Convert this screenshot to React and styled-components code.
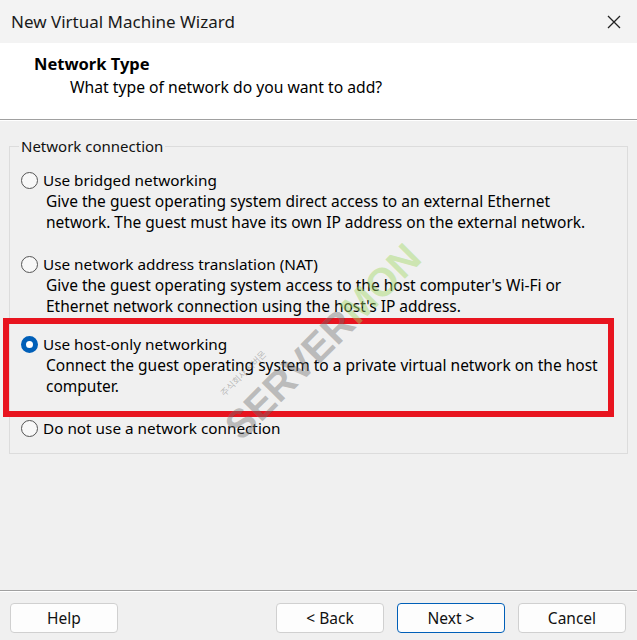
import React, { useState } from "react";
import styled, { createGlobalStyle } from "styled-components";

const GlobalStyle = createGlobalStyle`
  html, body {
    margin: 0;
    padding: 0;
    background: #f0f0f0;
  }
  body {
    font-family: "Noto Sans", "Open Sans", sans-serif;
    color: #000;
  }
`;

const Window = styled.div`
  position: relative;
  width: 637px;
  height: 640px;
  background: #f0f0f0;
  display: flex;
  flex-direction: column;
  overflow: hidden;
`;

const TitleBar = styled.div`
  height: 43px;
  display: flex;
  align-items: center;
  justify-content: space-between;
  padding: 0 12px 0 11px;
  background: #f3f3f3;
  font-size: 17px;
  color: #1a1a1a;
`;

const CloseButton = styled.div`
  width: 22px;
  height: 22px;
  display: flex;
  align-items: center;
  justify-content: center;
`;

const Header = styled.div`
  background: #fff;
  height: 77px;
  padding: 9px 0 0 34px;
  box-sizing: border-box;
  border-bottom: 1px solid #a0a0a0;
  box-shadow: 0 1px 0 #fff;
`;

const HeaderTitle = styled.div`
  font-weight: 700;
  font-size: 16.5px;
  line-height: 23px;
`;

const HeaderSub = styled.div`
  font-size: 15.7px;
  line-height: 24px;
  padding-left: 36px;
`;

const Body = styled.div`
  flex: 1;
  padding: 16px 9px 0 9px;
`;

const Group = styled.fieldset`
  margin: 0;
  min-width: 0;
  border: 1px solid #dcdcdc;
  padding: 13px 10px 14px 11px;
  box-sizing: border-box;
`;

const Legend = styled.legend`
  font-size: 15px;
  padding: 0 2px;
  margin-left: -2px;
  color: #111;
`;

const Option = styled.div`
  display: flex;
  flex-direction: column;
  margin-bottom: ${(p) => p.gap}px;
`;

const OptionRow = styled.label`
  display: flex;
  align-items: center;
  gap: 5px;
  font-size: 15.3px;
  line-height: 22px;
  cursor: default;
`;

const RadioDot = styled.span`
  width: 17px;
  height: 17px;
  box-sizing: border-box;
  border-radius: 50%;
  flex: none;
  background: ${(p) => (p.checked ? "#fff" : "#f8f8f8")};
  border: ${(p) => (p.checked ? "5px solid #005fb8" : "1.3px solid #555")};
`;

const Description = styled.div`
  padding-left: 25px;
  font-size: 15.5px;
  line-height: 21px;
  white-space: nowrap;
`;

const Highlight = styled.div`
  margin: 0 3px 0 -18px;
  padding: 9px 0 14px 12px;
  border: 6px solid #e8141f;
`;

const Footer = styled.div`
  border-top: 1px solid #a0a0a0;
  box-shadow: inset 0 1px 0 #fff;
  height: 50px;
  box-sizing: border-box;
  display: flex;
  align-items: flex-start;
  padding: 12px 11px 0 10px;
  gap: 13px;
`;

const Spacer = styled.div`
  flex: 1;
`;

const Button = styled.button`
  width: 108px;
  height: 30px;
  border-radius: 4px;
  background: #fdfdfd;
  border: 1px solid ${(p) => (p.primary ? "#005fb8" : "#d0d0d0")};
  font-family: inherit;
  font-size: 15.5px;
  color: #111;
  padding: 0;
`;

const Watermark = styled.div`
  position: absolute;
  left: 232px;
  top: 410px;
  transform: rotate(-45deg);
  transform-origin: left center;
  font-family: "Liberation Sans", Arial, sans-serif;
  font-weight: 900;
  font-size: 40px;
  pointer-events: none;
  white-space: nowrap;
  color: rgba(110, 110, 110, 0.42);
`;

const Green = styled.span`
  color: rgba(160, 215, 100, 0.45);
`;

const WatermarkSmall = styled.div`
  position: absolute;
  left: 222px;
  top: 388px;
  transform: rotate(-45deg);
  transform-origin: left center;
  font-family: "Noto Sans CJK KR", sans-serif;
  font-size: 9px;
  color: rgba(110, 110, 110, 0.45);
  pointer-events: none;
  white-space: nowrap;
`;

const options = [
  {
    label: "Use bridged networking",
    desc: [
      "Give the guest operating system direct access to an external Ethernet",
      "network. The guest must have its own IP address on the external network.",
    ],
  },
  {
    label: "Use network address translation (NAT)",
    desc: [
      "Give the guest operating system access to the host computer's Wi-Fi or",
      "Ethernet network connection using the host's IP address.",
    ],
  },
  {
    label: "Use host-only networking",
    desc: [
      "Connect the guest operating system to a private virtual network on the host",
      "computer.",
    ],
  },
  { label: "Do not use a network connection", desc: [] },
];

const OptionItem = ({ opt, checked, onPick, gap }) => (
  <Option gap={gap}>
    <OptionRow onClick={onPick}>
      <RadioDot checked={checked} />
      {opt.label}
    </OptionRow>
    {opt.desc.map((d) => (
      <Description key={d}>{d}</Description>
    ))}
  </Option>
);

export default () => {
  const [selected, setSelected] = useState(2);

  return (
    <Window>
      <GlobalStyle />
      <TitleBar>
        New Virtual Machine Wizard
        <CloseButton>
          <svg width="16" height="16" viewBox="0 0 16 16">
            <path d="M2 2 L14 14 M14 2 L2 14" stroke="#222" strokeWidth="1.3" />
          </svg>
        </CloseButton>
      </TitleBar>
      <Header>
        <HeaderTitle>Network Type</HeaderTitle>
        <HeaderSub>What type of network do you want to add?</HeaderSub>
      </Header>
      <Body>
        <Group>
          <Legend>Network connection</Legend>
          <OptionItem opt={options[0]} checked={selected === 0} onPick={() => setSelected(0)} gap={20} />
          <OptionItem opt={options[1]} checked={selected === 1} onPick={() => setSelected(1)} gap={1} />
          <Highlight>
            <OptionItem opt={options[2]} checked={selected === 2} onPick={() => setSelected(2)} gap={0} />
          </Highlight>
          <OptionItem opt={options[3]} checked={selected === 3} onPick={() => setSelected(3)} gap={0} />
        </Group>
      </Body>
      <Footer>
        <Button>Help</Button>
        <Spacer />
        <Button>&lt; Back</Button>
        <Button primary>Next &gt;</Button>
        <Button>Cancel</Button>
      </Footer>
      <WatermarkSmall>주식회사 서버몬</WatermarkSmall>
      <Watermark>
        SERVER<Green>MON</Green>
      </Watermark>
    </Window>
  );
};
